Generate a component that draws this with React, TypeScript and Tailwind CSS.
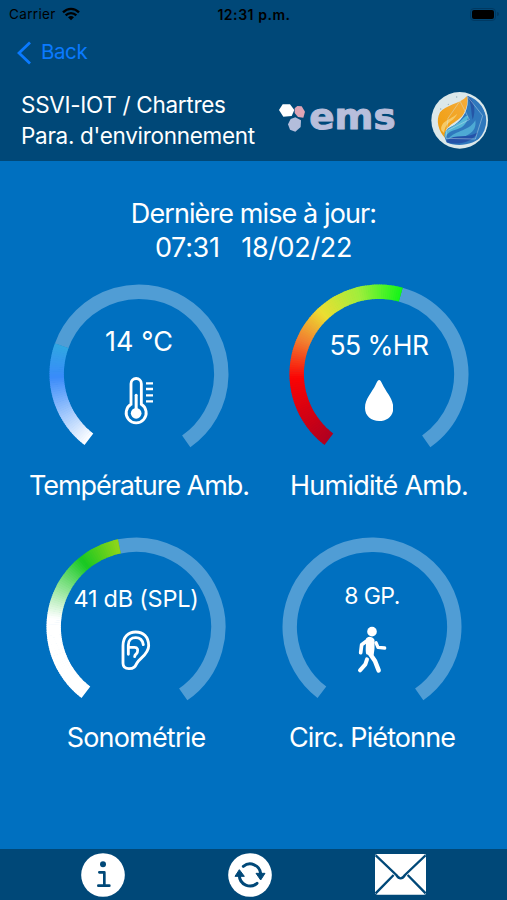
import React from 'react';

type Stop = { at: number; color: [number, number, number] };

interface GaugeProps {
  value: string;
  label: string;
  end?: number;
  stops?: Stop[];
  valueClass: string;
  iconClass: string;
  labelClass: string;
  icon: React.ReactNode;
}

// angles are in degrees, clockwise from the top of the dial
const START = -142.5;
const END = 145;

const point = (angle: number, r: number) => {
  const a = (angle * Math.PI) / 180;
  return `${(90 + r * Math.sin(a)).toFixed(2)} ${(90 - r * Math.cos(a)).toFixed(2)}`;
};

const arc = (from: number, to: number) =>
  `M${point(from, 82.3)} A82.3 82.3 0 ${to - from > 180 ? 1 : 0} 1 ${point(to, 82.3)}`;

const colorAt = (stops: Stop[], angle: number) => {
  const i = Math.max(1, stops.findIndex((s) => s.at >= angle));
  const a = stops[i - 1];
  const b = stops[i];
  const t = Math.min(1, Math.max(0, (angle - a.at) / (b.at - a.at)));
  return `rgb(${a.color.map((c, k) => Math.round(c + (b.color[k] - c) * t)).join(',')})`;
};

const Dial = ({ end, stops }: { end?: number; stops?: Stop[] }) => {
  const slices: number[] = [];
  if (end !== undefined) {
    for (let a = START; a < end; a += 1.5) slices.push(a);
  }
  return (
    <svg viewBox="0 0 180 180" className="col-start-1 row-start-1 h-[180px] w-[180px]" fill="none" strokeWidth="14.4">
      <path d={arc(end ?? START, END)} stroke="#509dd5" />
      {stops && end !== undefined && slices.map((a) => (
        <path key={a} d={arc(a, Math.min(a + 2, end))} stroke={colorAt(stops, Math.min(a + 0.75, end))} />
      ))}
    </svg>
  );
};

const Gauge = ({ value, label, end, stops, valueClass, iconClass, labelClass, icon }: GaugeProps) => (
  <div className="flex flex-col items-center">
    <div className="grid h-[180px] w-[180px] justify-items-center">
      <Dial end={end} stops={stops} />
      <div className="col-start-1 row-start-1 flex flex-col items-center">
        <div className={`whitespace-nowrap leading-8 ${valueClass}`}>{value}</div>
        <div className={iconClass}>{icon}</div>
      </div>
    </div>
    <div className={`whitespace-nowrap text-[27px] leading-8 ${labelClass}`}>{label}</div>
  </div>
);

const Thermometer = () => (
  <svg viewBox="0 0 96 153" className="h-[51px] w-[32px]" fill="none" stroke="white">
    <path d="M24 88V26a15.5 15.5 0 0 1 31 0V88a30 30 0 1 1-31 0Z" strokeWidth="8.5" />
    <path d="M39.5 61V105" strokeWidth="9" strokeLinecap="round" />
    <circle cx="39.5" cy="115" r="16" fill="white" stroke="none" />
    <path d="M69 25H90M69 42H90M69 61H90M69 79H90" strokeWidth="7" />
  </svg>
);

const Drop = () => (
  <svg viewBox="0 0 85 123" className="h-[41px] w-[28.3px]" fill="white">
    <path d="M42.5 0C46 0 48 4 52 12C64 38 85 56 85 84C85 108 66 123 42.5 123S0 108 0 84C0 56 21 38 33 12C37 4 39 0 42.5 0Z" />
  </svg>
);

const EarIcon = () => (
  <svg viewBox="0 0 96 129" className="h-[43px] w-[32px]" fill="none" stroke="white" strokeWidth="8.5">
    <path d="M9 50V103C9 114 17 119 27 119C42 119 46 112 51 102C58 88 86 76 86 50C86 24 70 9 47 9C25 9 9 24 9 50Z" />
    <path d="M25 76V48C25 34 34 26 47 26C60 26 68 35 70 47" strokeLinecap="round" />
    <path d="M25 55H44C52 55 55 63 52 70C50 76 44 76 44 83" strokeLinecap="round" />
  </svg>
);

const Walker = () => (
  <svg viewBox="0 0 90 144" className="h-[48px] w-[30px]" fill="none" stroke="white" strokeLinecap="round" strokeLinejoin="round">
    <circle cx="45" cy="17" r="14.5" fill="white" stroke="none" />
    <path d="M30 38C37 33 47 34 50 42L50 66C50 74 48 78 48 85L30 83C27 78 29 67 30 38Z" fill="white" strokeWidth="5" />
    <path d="M33 42L14 56L11 80" strokeWidth="11" />
    <path d="M57 50L63 64L83 66" strokeWidth="10" />
    <path d="M38 82L54 105L65 133" strokeWidth="13.5" />
    <path d="M30 100L25 115L9 133" strokeWidth="12" />
  </svg>
);

const EmsLogo = () => (
  <svg viewBox="0 0 390 210" className="h-[70px] w-[130px]">
    <polygon points="27,75 38,58 60,58 73,75 65,93 40,95" fill="#fff" />
    <polygon points="74,70 82,63 95,64 105,80 100,98 84,96 74,84" fill="#dda4b5" />
    <polygon points="62,102 76,97 93,106 92,126 76,140 60,134 54,118" fill="#b3bddb" />
    <text
      x="118"
      y="133"
      textLength="259"
      lengthAdjust="spacingAndGlyphs"
      fill="#b8bedb"
      stroke="#b8bedb"
      strokeWidth="3"
      className="font-['DejaVu_Sans',sans-serif] text-[106px] font-bold"
    >
      ems
    </text>
  </svg>
);

const Globe = () => (
  <svg viewBox="0 0 240 210" className="h-[70px] w-[80px]">
    <defs>
      <clipPath id="globe">
        <circle cx="119" cy="106" r="80" />
      </clipPath>
      <linearGradient id="sun" x1="0" y1="1" x2="1" y2="0">
        <stop offset="0" stopColor="#ef9d0c" />
        <stop offset="1" stopColor="#f5ad3c" />
      </linearGradient>
    </defs>
    <circle cx="119" cy="106" r="85" fill="#dbe8ea" />
    <g clipPath="url(#globe)">
      <path d="M142 32C118 58 78 58 60 82C46 106 56 140 76 160C68 124 106 116 126 94C140 76 144 52 142 32Z" fill="url(#sun)" />
      <path d="M142 32C192 46 216 110 190 148C164 184 106 186 80 172C68 150 74 134 92 126C124 112 150 74 142 32Z" fill="#2f78bd" />
      <path d="M76 158C66 130 108 126 130 100C152 76 146 112 126 126C106 138 86 134 76 158Z" fill="#55b6d7" />
      <path d="M82 168C98 134 144 144 166 106C172 146 136 158 82 168Z" fill="#4eaad4" />
      <path d="M80 166C106 146 140 162 174 142C154 178 104 180 80 172Z" fill="#2452a8" />
      <path d="M142 32C164 46 168 78 158 104C152 80 156 56 142 32Z" fill="#2556a6" />
      <path d="M64 136C60 108 92 104 112 86C100 112 76 108 72 144Z" fill="#f6ca66" />
    </g>
    <path d="M120 48L84 100L78 160L166 162L188 92L142 34M120 48L148 104L84 136" fill="none" stroke="#d2e8ed" strokeOpacity=".5" strokeWidth="2.5" />
    <g fill="#91aeb8">
      <circle cx="85" cy="58" r="2" />
      <circle cx="110" cy="36" r="2" />
      <circle cx="62" cy="72" r="2" />
    </g>
  </svg>
);

const WHITE: [number, number, number] = [255, 255, 255];

const temperature: Stop[] = [
  { at: -142.5, color: WHITE },
  { at: -92, color: [57, 139, 250] },
  { at: -70, color: [48, 168, 226] },
];

const humidity: Stop[] = [
  { at: -142.5, color: [176, 0, 32] },
  { at: -93, color: [250, 4, 4] },
  { at: -66, color: [242, 128, 48] },
  { at: -43, color: [236, 222, 50] },
  { at: -14, color: [160, 238, 60] },
  { at: 15.3, color: [20, 245, 24] },
];

const sound: Stop[] = [
  { at: -142.5, color: WHITE },
  { at: -84, color: WHITE },
  { at: -39, color: [24, 200, 34] },
  { at: -11.7, color: [146, 214, 24] },
];

const App = () => {
  return (
    <div className="flex h-[900px] w-[507px] flex-col overflow-hidden bg-[#0070c0] font-['Inter',sans-serif] text-white">
      <header className="flex h-[161px] shrink-0 flex-col bg-[#004878]">
        <div className="grid h-[28px] grid-cols-3 items-center pl-[9px] pr-[8px] text-[13.5px] text-black">
          <div className="flex items-center gap-[6px]">
            <span className="tracking-[0.35px]">Carrier</span>
            <svg viewBox="0 0 54 42" className="h-[14px] w-[18px]" fill="none" stroke="black" strokeWidth="7">
              <path d="M3 16C17 2 37 2 51 16M11 25C20 16 34 16 43 25" />
              <path d="M18 31C24 26 30 26 36 31L27 40Z" fill="black" stroke="none" />
            </svg>
          </div>
          <span className="text-center text-[14px] font-semibold tracking-[0.55px]">12:31 p.m.</span>
          <div className="flex items-center justify-end gap-[1px]">
            <div className="rounded-[4px] border border-[#003962] p-[1px]">
              <div className="h-[9px] w-[22px] rounded-[2px] bg-black" />
            </div>
            <div className="h-[4px] w-[1.5px] rounded-r bg-[#003962]" />
          </div>
        </div>

        <div className="flex h-[49px] items-center gap-[10px] pl-[17px] text-[#0a7aff]">
          <svg viewBox="0 0 14 24" className="h-[24px] w-[14px]" fill="none" stroke="currentColor" strokeWidth="2.8">
            <path d="M13 1.5L2 12L13 22.5" />
          </svg>
          <span className="text-[20.5px] tracking-[-0.4px]">Back</span>
        </div>

        <div className="flex h-[84px] items-start pl-[21px] pt-[8px]">
          <div className="w-[249px] whitespace-nowrap pt-[5px] text-[22.5px] leading-[30.5px]">
            <div className="tracking-[-0.3px]">SSVI-IOT / Chartres</div>
            <div className="tracking-[-0.3px]">Para. d'environnement</div>
          </div>
          <EmsLogo />
          <div className="ml-[20px]">
            <Globe />
          </div>
        </div>
      </header>

      <main className="flex h-[688px] shrink-0 flex-col">
        <div className="h-[123px] whitespace-pre pt-[35.5px] text-center text-[27px] leading-[34px]">
          <div className="tracking-[-0.9px]">Dernière mise à jour:</div>
          <div className="tracking-[-0.35px]">07:31   18/02/22</div>
        </div>

        <div className="grid h-[253px] w-[499px] grid-cols-2 pl-[19px]">
          <Gauge
            value="14 °C"
            label="Température Amb."
            end={-70}
            stops={temperature}
            valueClass="mt-[42px] text-[27px] tracking-[0.1px]"
            iconClass="mt-[17px]"
            labelClass="mt-[6px] tracking-[-1.05px]"
            icon={<Thermometer />}
          />
          <Gauge
            value="55 %HR"
            label="Humidité Amb."
            end={15.3}
            stops={humidity}
            valueClass="mt-[45px] text-[26.5px] tracking-[-0.6px]"
            iconClass="mt-[19px]"
            labelClass="mt-[6px] tracking-[-0.75px]"
            icon={<Drop />}
          />
        </div>

        <div className="grid w-[490px] grid-cols-2 pl-[18px]">
          <Gauge
            value="41 dB (SPL)"
            label="Sonométrie"
            end={-11.7}
            stops={sound}
            valueClass="mt-[46px] text-[23.5px] tracking-[-0.25px]"
            iconClass="mt-[14px]"
            labelClass="mt-[5px] tracking-[-0.8px]"
            icon={<EarIcon />}
          />
          <Gauge
            value="8 GP."
            label="Circ. Piétonne"
            valueClass="mt-[43px] text-[23px] tracking-[-0.6px]"
            iconClass="mt-[14px]"
            labelClass="mt-[5px] tracking-[-0.9px]"
            icon={<Walker />}
          />
        </div>
      </main>

      <footer className="flex h-[51px] shrink-0 items-center bg-[#004878] pl-[81px]">
        <svg viewBox="0 0 132 132" className="h-[44px] w-[44px]">
          <circle cx="66" cy="66" r="65.5" fill="white" />
          <circle cx="66" cy="34" r="9" fill="#004878" />
          <path d="M55 58H70V98M52 98H85" fill="none" stroke="#004878" strokeWidth="8" strokeLinecap="round" strokeLinejoin="round" />
        </svg>
        <svg viewBox="0 0 132 132" className="ml-[103px] h-[44px] w-[44px]">
          <circle cx="66" cy="66" r="65.5" fill="white" />
          <g fill="none" stroke="#004878" strokeWidth="9" strokeLinecap="round">
            <path d="M46 40A32 32 0 0 1 98 62" />
            <path d="M87 91A32 32 0 0 1 34 68" />
          </g>
          <path d="M84 61H111L98 81ZM21 70H49L34 50Z" fill="#004878" stroke="#004878" strokeWidth="3" strokeLinejoin="round" />
        </svg>
        <svg viewBox="0 0 154 122" className="ml-[103px] h-[40.7px] w-[51.3px]">
          <rect width="154" height="122" rx="7" fill="white" />
          <path d="M2 4L64 63Q77 83 90 63L152 4M56 63L2 118M98 63L152 118" fill="none" stroke="#004878" strokeWidth="7" />
        </svg>
      </footer>
    </div>
  );
};

export default App;
